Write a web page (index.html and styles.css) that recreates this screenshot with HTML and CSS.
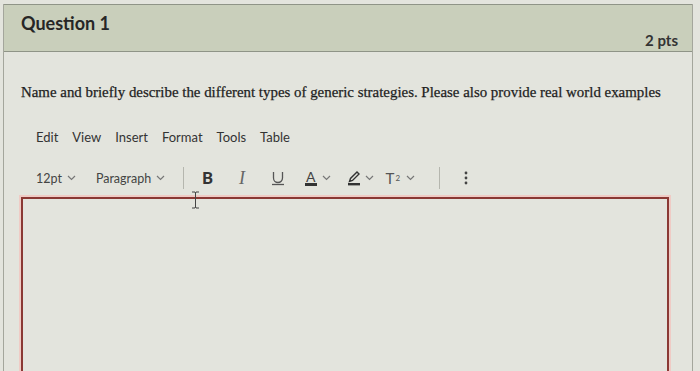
FILE: index.html
```html
<!DOCTYPE html>
<html lang="en">
<head>
  <meta charset="UTF-8">
  <title>Question 1</title>
  <link rel="stylesheet" href="styles.css">
</head>
<body>

<div class="question">
  <div class="question-header">
    <h2>Question 1</h2>
    <span class="points">2 pts</span>
  </div>

  <div class="question-body">
    <p class="question-text">Name and briefly describe the different types of generic strategies. Please also provide real world examples</p>

    <div class="editor">
      <div class="menubar">
        <span>Edit</span>
        <span>View</span>
        <span>Insert</span>
        <span>Format</span>
        <span>Tools</span>
        <span>Table</span>
      </div>

      <div class="toolbar">
        <span class="select size">12pt
          <svg class="chev" width="9" height="6" viewBox="0 0 9 6"><polyline points="1,1 4.5,4.5 8,1"/></svg>
        </span>
        <span class="select block">Paragraph
          <svg class="chev" width="9" height="6" viewBox="0 0 9 6"><polyline points="1,1 4.5,4.5 8,1"/></svg>
        </span>
        <span class="sep"></span>
        <span class="btn bold">B</span>
        <span class="btn italic">I</span>
        <span class="btn underline">
          <svg width="16" height="16" viewBox="0 0 16 16"><path d="M3.5 2v6a4.5 4.5 0 0 0 9 0V2" fill="none" stroke="#555" stroke-width="1.3"/><line x1="2" y1="14.5" x2="14" y2="14.5" stroke="#555" stroke-width="1.3"/></svg>
        </span>
        <span class="btn fore">
          <span class="letter-a">A</span>
          <svg class="chev" width="9" height="6" viewBox="0 0 9 6"><polyline points="1,1 4.5,4.5 8,1"/></svg>
        </span>
        <span class="btn back">
          <svg width="15" height="16" viewBox="0 0 15 16"><path d="M2.5 11.5l1-3 6.5-6.5 2 2L5.5 10.5z" fill="none" stroke="#333" stroke-width="1.4"/><rect x="1" y="13" width="12" height="2.4" fill="#333"/></svg>
          <svg class="chev" width="9" height="6" viewBox="0 0 9 6"><polyline points="1,1 4.5,4.5 8,1"/></svg>
        </span>
        <span class="btn sup">T<sup>2</sup>
          <svg class="chev" width="9" height="6" viewBox="0 0 9 6"><polyline points="1,1 4.5,4.5 8,1"/></svg>
        </span>
        <span class="sep sep-end"></span>
        <span class="btn more">
          <svg width="4" height="14" viewBox="0 0 4 14"><circle cx="2" cy="2" r="1.4"/><circle cx="2" cy="7" r="1.4"/><circle cx="2" cy="12" r="1.4"/></svg>
        </span>
      </div>

      <div class="edit-area">
        <svg class="ibeam" width="9" height="18" viewBox="0 0 9 18"><path d="M1 1h3l0.5 1 0.5-1h3M4.5 2v14M1 17h3l0.5-1 0.5 1h3" fill="none" stroke="#444" stroke-width="1"/></svg>
      </div>
    </div>
  </div>
</div>

</body>
</html>
```

FILE: styles.css
```css
/* Page */
body {
  margin: 0;
  padding: 0;
  background: #e3e4dd;
  color: #2b2b2b;
  font-family: 'Lato', sans-serif;
  overflow: hidden;
}

.question {
  margin-left: 3px;
  width: 688px;
  height: 371px;
  border-left: 1px solid #a4a69c;
  border-right: 1px solid #a4a69c;
}

/* Header */
.question-header {
  height: 46px;
  margin-top: 4px;
  padding: 0 14px 0 17px;
  background: #c9cfbb;
  border-top: 1px solid #8f9487;
  border-bottom: 1px solid #8f9487;
  display: flex;
  justify-content: space-between;
}

.question-header h2 {
  margin: 7px 0 0;
  font-size: 18px;
  font-weight: bold;
  color: #262626;
}

.points {
  align-self: flex-end;
  margin-bottom: 2px;
  font-size: 15px;
  font-weight: bold;
  color: #333;
}

/* Body */
.question-body {
  padding: 0 0 0 17px;
}

.question-text {
  margin: 32px 0 0;
  font-family: 'Liberation Serif', serif;
  font-size: 14.9px;
  color: #1e1e1e;
  -webkit-text-stroke: 0.25px #1e1e1e;
}

.editor {
  margin-top: 26px;
}

.menubar {
  display: flex;
  gap: 14px;
  padding-left: 15px;
  font-size: 13px;
  color: #333;
  height: 20px;
  align-items: center;
}

/* Toolbar */
.toolbar {
  display: flex;
  align-items: center;
  height: 26px;
  margin-top: 18px;
  padding-left: 15px;
  color: #444;
  font-size: 12.5px;
}

.chev {
  fill: none;
  stroke: #777;
  stroke-width: 1.2;
  margin-left: 5px;
}

.select {
  display: flex;
  align-items: center;
}

.size {
  margin-right: 20px;
}

.block {
  margin-right: 18px;
}

.sep {
  width: 1px;
  height: 22px;
  background: #b5b6ae;
}

.sep-end {
  margin-left: 24px;
}

.btn {
  display: flex;
  align-items: center;
  justify-content: center;
}

.bold {
  margin-left: 18px;
  font-family: 'Roboto', sans-serif;
  font-weight: bold;
  font-size: 17px;
  color: #333;
}

.italic {
  margin-left: 26px;
  font-family: 'Liberation Serif', serif;
  font-style: italic;
  font-size: 18px;
  color: #666;
}

.underline {
  margin-left: 25px;
}

.fore {
  margin-left: 19px;
}

.back {
  margin-left: 16px;
}

.back .chev {
  margin-left: 3px;
}

.letter-a {
  font-size: 14px;
  line-height: 13px;
  color: #444;
  border-bottom: 3px solid #333;
  padding: 0 1px;
}

.sup {
  margin-left: 12px;
  font-size: 15px;
  color: #555;
}

.sup sup {
  font-size: 8px;
  margin-left: 1px;
}

.sup .chev {
  margin-left: 6px;
}

.more {
  margin-left: 24px;
  fill: #444;
}

/* Editing area */
.edit-area {
  position: relative;
  margin-top: 6px;
  width: 644px;
  height: 200px;
  border: 2px solid #8a3834;
  box-shadow: 0 0 0 2px #efcbc5;
}

.ibeam {
  position: absolute;
  left: 168px;
  top: -8px;
}
```
